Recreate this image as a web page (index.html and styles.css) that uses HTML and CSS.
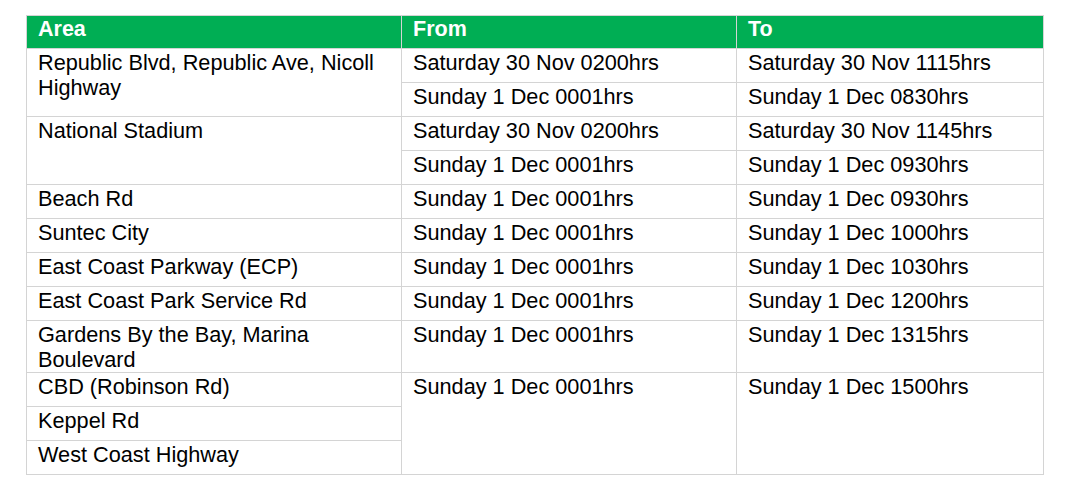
FILE: index.html
```html
<!DOCTYPE html>
<html>
<head>
<meta charset="utf-8">
<link rel="stylesheet" href="styles.css">
</head>
<body>
<table class="closures">
  <colgroup>
    <col class="c-area">
    <col class="c-from">
    <col class="c-to">
  </colgroup>
  <thead>
    <tr><th>Area</th><th>From</th><th>To</th></tr>
  </thead>
  <tbody>
    <tr><td rowspan="2">Republic Blvd, Republic Ave, Nicoll Highway</td><td>Saturday 30 Nov 0200hrs</td><td>Saturday 30 Nov 1115hrs</td></tr>
    <tr><td>Sunday 1 Dec 0001hrs</td><td>Sunday 1 Dec 0830hrs</td></tr>
    <tr><td rowspan="2">National Stadium</td><td>Saturday 30 Nov 0200hrs</td><td>Saturday 30 Nov 1145hrs</td></tr>
    <tr><td>Sunday 1 Dec 0001hrs</td><td>Sunday 1 Dec 0930hrs</td></tr>
    <tr><td>Beach Rd</td><td>Sunday 1 Dec 0001hrs</td><td>Sunday 1 Dec 0930hrs</td></tr>
    <tr><td>Suntec City</td><td>Sunday 1 Dec 0001hrs</td><td>Sunday 1 Dec 1000hrs</td></tr>
    <tr><td>East Coast Parkway (ECP)</td><td>Sunday 1 Dec 0001hrs</td><td>Sunday 1 Dec 1030hrs</td></tr>
    <tr><td>East Coast Park Service Rd</td><td>Sunday 1 Dec 0001hrs</td><td>Sunday 1 Dec 1200hrs</td></tr>
    <tr><td>Gardens By the Bay, Marina Boulevard</td><td>Sunday 1 Dec 0001hrs</td><td>Sunday 1 Dec 1315hrs</td></tr>
    <tr><td>CBD (Robinson Rd)</td><td rowspan="3">Sunday 1 Dec 0001hrs</td><td rowspan="3">Sunday 1 Dec 1500hrs</td></tr>
    <tr><td>Keppel Rd</td></tr>
    <tr><td>West Coast Highway</td></tr>
  </tbody>
</table>
</body>
</html>
```

FILE: styles.css
```css
html, body {
  margin: 0;
  padding: 0;
  background: #ffffff;
}

body {
  padding: 15px 0 0 26px;
  font-family: "Liberation Sans", Arial, sans-serif;
  color: #000000;
}

.closures {
  border-collapse: collapse;
  table-layout: fixed;
  width: 1017px;
  font-size: 21.7px;
  line-height: 25px;
}

.c-area { width: 375px; }
.c-from { width: 335px; }
.c-to { width: 307px; }

.closures th,
.closures td {
  border: 1px solid #d4d4d4;
  text-align: left;
  vertical-align: top;
  padding: 1px 11px 0 11px;
}

.closures th {
  background: #00ae54;
  color: #ffffff;
  font-weight: bold;
  height: 31px;
  padding-top: 1px;
  font-size: 21.5px;
}

.closures td {
  height: 32px;
}
```
